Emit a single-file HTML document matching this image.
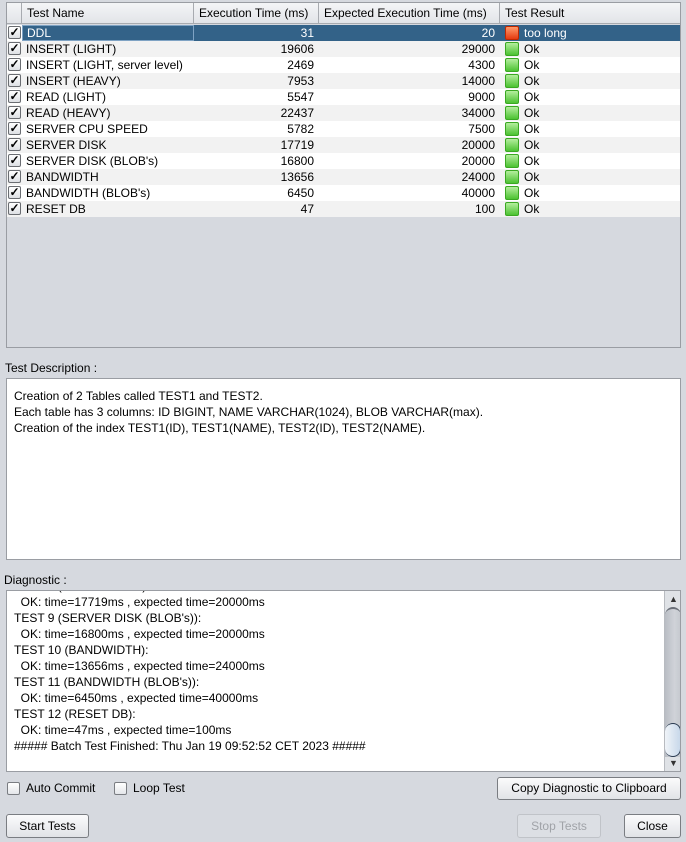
<!DOCTYPE html>
<html><head><style>
*{margin:0;padding:0;box-sizing:border-box}
body{width:686px;height:842px;background:#d6d9df;font-family:"Liberation Sans",sans-serif;font-size:12px;color:#000;position:relative;overflow:hidden}
.a{position:absolute}
.tbl{left:6px;top:2px;width:675px;height:346px;border:1px solid #9a9da3;background:#d6d9df}
.hdr{left:0;top:0;width:673px;height:21px;background:linear-gradient(#f4f5f7,#e2e4e8);border-bottom:1px solid #a8abb0}
.hc{position:absolute;top:0;height:20px;line-height:20px;border-right:1px solid #a8abb0;padding-left:5px}
.row{position:absolute;left:0;width:673px;height:16px;line-height:16px}
.c{position:absolute;top:0;height:16px;white-space:nowrap}
.cb{position:absolute;left:1px;top:1px;width:13px;height:13px;border:1px solid #6a6d72;border-radius:2px;background:linear-gradient(#fff,#dde0e4);font-size:12px;line-height:11px;text-align:center;font-weight:bold}
.ic{position:absolute;left:5px;top:1px;width:14px;height:14px;border-radius:2px}
.g{background:linear-gradient(#b4ee9e,#4cc232);border:1px solid #3aa822}
.r{background:linear-gradient(#ff9a6a,#e53a10);border:1px solid #c02800}
.box{background:#fff;border:1px solid #9a9da3}
.btn{border:1px solid #7a7d82;border-radius:3px;background:linear-gradient(#fbfbfc,#e1e3e7);text-align:center;line-height:21px;font-size:12px}
.chk{width:13px;height:13px;border:1px solid #7a7d82;border-radius:2px;background:linear-gradient(#fff,#e4e6ea)}
</style></head><body>
<div class="a tbl">
 <div class="a hdr">
  <div class="hc" style="left:0;width:15px"></div>
  <div class="hc" style="left:15px;width:172px">Test Name</div>
  <div class="hc" style="left:187px;width:125px">Execution Time (ms)</div>
  <div class="hc" style="left:312px;width:181px">Expected Execution Time (ms)</div>
  <div class="hc" style="left:493px;width:180px;border-right:none">Test Result</div>
 </div>
 <div id="rows"></div>
</div>
<script>
var d=[["DDL",31,20,0],["INSERT (LIGHT)",19606,29000,1],["INSERT (LIGHT, server level)",2469,4300,1],["INSERT (HEAVY)",7953,14000,1],["READ (LIGHT)",5547,9000,1],["READ (HEAVY)",22437,34000,1],["SERVER CPU SPEED",5782,7500,1],["SERVER DISK",17719,20000,1],["SERVER DISK (BLOB's)",16800,20000,1],["BANDWIDTH",13656,24000,1],["BANDWIDTH (BLOB's)",6450,40000,1],["RESET DB",47,100,1]];
var h="";
d.forEach(function(r,i){
 var sel=i==0, bg=sel?"#336288":(i%2?"#f2f2f2":"#fff"), col=sel?"#fff":"#000";
 h+='<div class="row" style="top:'+(22+i*16)+'px;background:'+bg+';color:'+col+'">'+
 '<div class="c" style="left:0;width:15px;background:'+(sel?"#fff":bg)+'"><div class="cb" style="color:#000">&#10003;</div></div>'+
 '<div class="c" style="left:15px;width:172px;padding-left:4px;'+(sel?'border:1px solid #7fa3c4;line-height:14px':'')+'">'+r[0]+'</div>'+
 '<div class="c" style="left:187px;width:125px;text-align:right;padding-right:5px">'+r[1]+'</div>'+
 '<div class="c" style="left:312px;width:181px;text-align:right;padding-right:5px">'+r[2]+'</div>'+
 '<div class="c" style="left:493px;width:180px"><div class="ic '+(r[3]?'g':'r')+'"></div><span style="position:absolute;left:24px">'+(r[3]?'Ok':'too long')+'</span></div></div>';
});
document.getElementById("rows").innerHTML=h;
</script>
<div class="a" style="left:5px;top:361px">Test Description :</div>
<div class="a box" style="left:6px;top:378px;width:675px;height:182px;padding:9px 0 0 7px;line-height:16px">Creation of 2 Tables called TEST1 and TEST2.<br>Each table has 3 columns: ID BIGINT, NAME VARCHAR(1024), BLOB VARCHAR(max).<br>Creation of the index TEST1(ID), TEST1(NAME), TEST2(ID), TEST2(NAME).</div>
<div class="a" style="left:4px;top:573px">Diagnostic :</div>
<div class="a box" style="left:6px;top:590px;width:675px;height:182px;overflow:hidden">
 <div class="a" style="left:7px;top:-13px;line-height:16px;white-space:pre">TEST 8 (SERVER DISK):
  OK: time=17719ms , expected time=20000ms
TEST 9 (SERVER DISK (BLOB's)):
  OK: time=16800ms , expected time=20000ms
TEST 10 (BANDWIDTH):
  OK: time=13656ms , expected time=24000ms
TEST 11 (BANDWIDTH (BLOB's)):
  OK: time=6450ms , expected time=40000ms
TEST 12 (RESET DB):
  OK: time=47ms , expected time=100ms
##### Batch Test Finished: Thu Jan 19 09:52:52 CET 2023 #####</div>
 <div class="a" style="left:657px;top:0;width:17px;height:180px;background:#dfe2e6;border-left:1px solid #b8bbc0">
  <div class="a" style="left:4px;top:3px;font-size:9px;color:#333">&#9650;</div>
  <div class="a" style="left:0;top:16px;width:16px;height:150px;border-radius:8px 8px 0 0;background:linear-gradient(90deg,#b9bdc4,#d0d3d8 60%,#c4c8ce);border-top:2px solid #6a6f78"></div>
  <div class="a" style="left:0;top:132px;width:16px;height:34px;border-radius:8px;border:1px solid #2a3a50;border-left:none;background:linear-gradient(90deg,#f0f4f8,#c8d8ea)"></div>
  <div class="a" style="left:4px;top:167px;font-size:9px;color:#333">&#9660;</div>
 </div>
</div>
<div class="a chk" style="left:7px;top:782px"></div>
<div class="a" style="left:26px;top:781px">Auto Commit</div>
<div class="a chk" style="left:114px;top:782px"></div>
<div class="a" style="left:133px;top:781px">Loop Test</div>
<div class="a btn" style="left:497px;top:777px;width:184px;height:23px">Copy Diagnostic to Clipboard</div>
<div class="a btn" style="left:6px;top:814px;width:83px;height:24px;line-height:22px">Start Tests</div>
<div class="a btn" style="left:517px;top:814px;width:84px;height:24px;line-height:22px;color:#a0a3a8;border-color:#c0c3c8;background:#dcdfe4">Stop Tests</div>
<div class="a btn" style="left:624px;top:814px;width:57px;height:24px;line-height:22px">Close</div>
</body></html>
